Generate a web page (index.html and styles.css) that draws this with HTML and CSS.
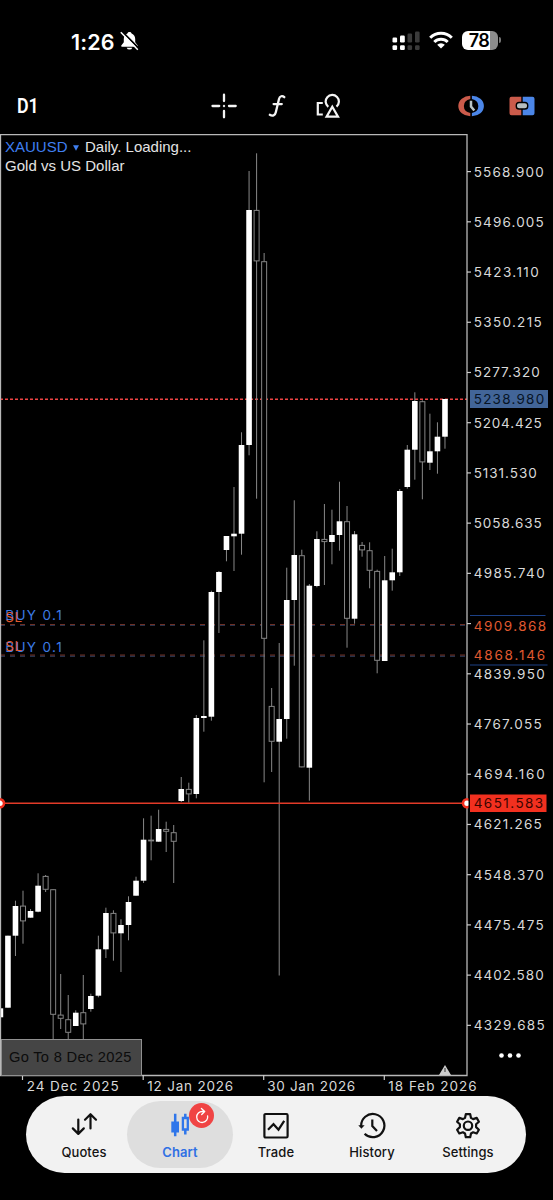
FILE: index.html
```
<!DOCTYPE html>
<html lang="en">
<head>
<meta charset="utf-8">
<title>XAUUSD Chart</title>
<link rel="stylesheet" href="styles.css">
</head>
<body>
<div class="phone">
  <header class="status">
    <div class="clock">
      <span>1:26</span>
      <svg width="19" height="20" viewBox="0 0 19 20"><path d="M9.500 1C8.200 1 7.600 1.700 7.400 2.500 4.900 3.400 3.800 5.500 3.800 8v3.200L1.300 14.500c-.4.700-.1 1.200.7 1.200h15c.8 0 1.100-.5.700-1.200L15.200 11.200V8c0-2.500-1.100-4.600-3.600-5.500C11.400 1.700 10.800 1 9.500 1zM6.700 16.700a2.900 2.500 0 0 0 5.600 0z" fill="#fff"/><path d="M2.200.6 19 17.600" stroke="#000" stroke-width="1.800"/><path d="M.8 1.300 17.800 18.800" stroke="#fff" stroke-width="1.500"/></svg>
    </div>
    <div class="indicators">
      <svg width="29" height="20" viewBox="0 0 29 20"><g fill="#fff"><rect x=".5" y="6.500" width="4.600" height="5" rx="1.200"/><rect x="8" y="4.500" width="4.800" height="7" rx="1.200"/><rect x=".5" y="14.300" width="4.600" height="4.700" rx="1.200"/><rect x="8" y="14.300" width="4.800" height="4.700" rx="1.200"/></g><g fill="#3b3b3b"><rect x="15.500" y="2.500" width="4.600" height="9" rx="1.200"/><rect x="23" y=".5" width="4.600" height="11" rx="1.200"/><rect x="15.500" y="14.300" width="4.600" height="4.700" rx="1.200"/><rect x="23" y="14.300" width="4.600" height="4.700" rx="1.200"/></g></svg>
      <svg class="wifi" width="24" height="18" viewBox="0 0 24 18"><g fill="none" stroke="#fff" stroke-width="3"><path d="M1.200 6.800a15.300 15.300 0 0 1 21.600 0"/><path d="M5.300 11a9.500 9.500 0 0 1 13.400 0"/></g><path d="M12 17.600 8.200 13.800a5.400 5.400 0 0 1 7.600 0z" fill="#fff"/></svg>
      <div class="battery"><span>78</span></div><i class="cap"></i>
    </div>
  </header>

  <nav class="toolbar">
    <div class="period">D1</div>
    <div class="tools">
      <svg width="26" height="26" viewBox="0 0 26 26"><g stroke="#f4f4f4" stroke-width="2.300" stroke-linecap="round"><path d="M13 1.700v6.300M13 18v6.300M1.500 13h6.700M18 13h6.700"/></g><circle cx="13" cy="13" r="1.200" fill="#ddd"/></svg>
      <svg width="18" height="24" viewBox="0 0 18 24"><path d="M16.300 3.200C14.400 1.400 11.700 1.900 11 4.900L7.800 18.200C7.100 21.600 4.500 22.500 1.800 20.800M5.600 10.100h8.200" fill="none" stroke="#f4f4f4" stroke-width="2.300" stroke-linecap="round"/></svg>
      <svg width="24" height="26" viewBox="0 0 24 26"><g fill="none" stroke="#f4f4f4" stroke-width="2.200"><path d="M6.800 10H1.800V21.500h5"/><path d="M12.300 13.800A6.600 6.600 0 1 1 20.500 13.600"/><path d="M16.300 13.800 22 23.700H10.600z"/></g></svg>
    </div>
    <div class="trade-tools">
      <svg width="26" height="22" viewBox="0 0 26 22"><path d="M12.300.8A12 10.200 0 0 0 12.300 21.200V18A8.400 7.200 0 0 1 12.300 4z" fill="#cb5b4b"/><path d="M13.900.8A12 10.200 0 0 1 13.900 21.200V18A8.400 7.200 0 0 0 13.900 4z" fill="#4b86e8"/><path d="M13 5.800v5.700l3.300 4" fill="none" stroke="#b9c4c5" stroke-width="2.500"/></svg>
      <svg width="26" height="20" viewBox="0 0 26 20"><path d="M2.500.8h9.800v18.400H2.500a2 2 0 0 1-2-2V2.800a2 2 0 0 1 2-2z" fill="#cb5b4b"/><path d="M13.700.8h9.800a2 2 0 0 1 2 2v14.400a2 2 0 0 1-2 2h-9.800z" fill="#4b86e8"/><rect x="7.300" y="6.500" width="11.400" height="6.500" rx="2.800" fill="#b6bec0" stroke="#000" stroke-width="1.400"/></svg>
    </div>
  </nav>

  <main class="chart">
    <svg id="plot" class="plot" width="553" height="966" viewBox="0 134 553 966">
      <g id="levels" class="levels">
        <path class="last" d="M0 399.200H467"/>
        <path class="sl" d="M0 624.500H467M0 655.100H467"/>
        <path class="order" d="M0 625.500H467M0 656.300H467"/>
      </g>
      <g id="candles"></g>
      <path class="alert" d="M0 803.300H467"/>
      <path class="frame" d="M0 134.500H467V1075.500H0M.5 134V1075"/>
      <g class="handles"><circle cx="0" cy="803.300" r="4"/><circle cx="467" cy="803.300" r="4"/></g>
      <path class="mask" d="M468.500 798h5v11h-5z"/>
      <path d="M439 1075 445 1065 451 1075z" fill="#ccc"/><path d="M445 1068v4" stroke="#333"/>
      <rect class="order-line" x="470" y="615" width="75.500" height="1"/><rect class="order-line" x="470" y="664.500" width="77.500" height="1"/>
      <rect x="470" y="390" width="78" height="18" fill="#426598"/>
      <rect x="470" y="794.500" width="76.500" height="17.500" fill="#f2301f"/>
      <g id="axis" class="axis"></g>
      <g class="axis">
        <text x="473.700" y="404.300" class="on-blue" textLength="70.500">5238.980</text>
        <text x="473.700" y="631" class="stop" textLength="72.500">4909.868</text>
        <text x="473.700" y="659.600" class="stop" textLength="71.500">4868.146</text>
        <text x="473.700" y="808.300" class="on-red" textLength="69.500">4651.583</text>
        <text x="5.200" y="652.300" class="buy" textLength="56.500">BUY 0.1</text>
        <text x="5.200" y="620.300" class="buy" textLength="56.500">BUY 0.1</text>
        <text x="5.200" y="651" class="stop" textLength="17">SL</text>
        <text x="5.200" y="621.500" class="stop" textLength="17">SL</text>
      </g>
      <g fill="#fff"><circle cx="501.500" cy="1055.500" r="2.300"/><circle cx="510" cy="1055.500" r="2.300"/><circle cx="518.500" cy="1055.500" r="2.300"/></g>
    </svg>
    <div class="legend">
      <div><b>XAUUSD</b> <svg width="6" height="6" viewBox="0 0 6 6"><path d="M0 .3h6L3 5.800z" fill="#3f7ff0"/></svg> <span>Daily. Loading...</span></div>
      <div class="name">Gold vs US Dollar</div>
    </div>
    <div class="goto">Go To 8 Dec 2025</div>
  </main>

  <nav class="tabs">
    <div class="tab"><svg width="28" height="28" viewBox="0 0 28 28"><path d="M8.300 7.500v13.700M2.800 16.400l5.500 5.500 5.500-5.500M20.500 16.500V3M15 7.700l5.500-5.500L26 7.700" fill="none" stroke="#111" stroke-width="2.200" stroke-linecap="round" stroke-linejoin="round"/></svg><span>Quotes</span></div>
    <div class="tab active"><svg width="28" height="28" viewBox="0 0 28 28"><g fill="none" stroke="#2f76ea" stroke-width="2.500"><path d="M9.200 1.800v22.500M19.300 1.800v4M19.300 17.500v5"/><path d="M16.900 6h4.900v11.500h-4.900z" stroke-width="2.300"/></g><path d="M5.300 9.500H13v11H5.300z" fill="#2f76ea"/></svg><span>Chart</span>
      <div class="badge"><svg width="16" height="18" viewBox="0 0 16 18"><path d="M13.600 8.900A5.500 5.500 0 1 1 8.500 4.500h1.700M7.400 1.500l3.300 3-3 3" fill="none" stroke="#fff" stroke-width="1.300" stroke-linecap="round" stroke-linejoin="round"/></svg></div></div>
    <div class="tab"><svg width="28" height="28" viewBox="0 0 28 28"><g fill="none" stroke="#111" stroke-width="2.200"><rect x="2.400" y="2" width="23.200" height="23.500" rx="1.200"/><path d="M6 17.700l5.500-5.500 5 5.500L22.200 8.800"/></g></svg><span>Trade</span></div>
    <div class="tab"><svg width="28" height="28" viewBox="0 0 28 28"><path d="M3.200 14.300A11.600 11.600 0 1 1 6.600 21.800M14.300 7.500v6.600l4.700 4.900" fill="none" stroke="#111" stroke-width="2.200"/><path d="M.3 13.200h6.300l-3.200 3.500z" fill="#111"/></svg><span>History</span></div>
    <div class="tab"><svg width="28" height="28" viewBox="0 0 28 28"><g fill="none" stroke="#111" stroke-width="2.200" stroke-linejoin="round"><path d="M11.800 2.200h4.400l.8 3.700 2.100 1.200 3.600-1.200 2.200 3.800-2.800 2.600v2.800l2.800 2.600-2.200 3.800-3.600-1.200-2.100 1.200-.8 3.700h-4.400l-.8-3.700-2.100-1.200-3.600 1.200L3.100 17.700l2.800-2.600v-2.800L3.100 9.700l2.200-3.800 3.600 1.200L11 5.900z"/><circle cx="14" cy="13.700" r="4.200"/></g></svg><span>Settings</span></div>
  </nav>
</div>
<script src="chart.js"></script>
</body>
</html>
```
FILE: styles.css
```
* { box-sizing: border-box; }
body { margin: 0; background: #000; color: #fff; font-family: Inter, "Liberation Sans", sans-serif; }
svg { display: block; flex: none; }
.phone { width: 553px; height: 1200px; display: flex; flex-direction: column; overflow: hidden; background: #000; }

.status { height: 76px; padding: 30px 52px 0 71px; display: flex; justify-content: space-between; align-items: flex-start; }
.clock { display: flex; gap: 5px; font-size: 21.500px; line-height: 24px; font-weight: 600; letter-spacing: .1px; }
.clock svg { margin-top: 1px; }
.indicators { display: flex; align-items: flex-start; padding-top: 1px; }
.wifi { margin: 0 9px 0 8px; }
.battery { width: 36px; height: 19px; padding-right: 2px; border-radius: 6px; background: linear-gradient(90deg, #fff 28px, #8b8b8b 28px); color: #000; font-size: 18px; font-weight: 600; line-height: 19px; text-align: center; letter-spacing: -.6px; }
.cap { width: 2px; height: 6px; margin: 6px 0 0 1px; border-radius: 0 2px 2px 0; background: #777; }

.toolbar { height: 58px; padding: 1px 18px 0 17px; display: grid; grid-template-columns: 194px 1fr auto; align-items: center; }
.period { font: 600 20.500px/24px "Roboto", sans-serif; transform: scaleX(.87); transform-origin: left; }
.tools { display: flex; align-items: center; gap: 30.500px; }
.trade-tools { display: flex; align-items: center; gap: 25px; }

.chart { position: relative; height: 962px; flex: none; }
.last { stroke: #ef4444; stroke-width: 1.600; stroke-dasharray: 3 2; }
.sl { stroke: #6e3025; stroke-width: 1.200; stroke-dasharray: 5 5; }
.order { stroke: #26314a; stroke-width: 1.200; stroke-dasharray: 5 5; }
.order-line { fill: #1d4186; }
.alert { stroke: #e23a28; stroke-width: 1.600; }
.frame { fill: none; stroke: #b8b8b8; stroke-width: 1.300; }
.handles { fill: #fff; stroke: #f2301f; stroke-width: 2.600; }
.mask { fill: #000; }
.wick { stroke: #888; stroke-width: 1; }
.up { fill: #fff; }
.down { fill: #000; stroke: #858585; stroke-width: 1; }
.axis { fill: #d9d9d9; font-size: 13.500px; }
.axis path { stroke: #ccc; stroke-width: 1.200; }
.axis .on-blue { fill: #071426; }
.axis .on-red { fill: #3a0500; }
.axis .stop { fill: #e05a30; }
.axis .buy { fill: #3d7be4; }

.legend { position: absolute; left: 5px; top: 4px; font: 15px/18.500px "Liberation Sans", sans-serif; color: #e4e4e4; }
.legend div { display: flex; align-items: center; white-space: nowrap; }
.legend b { font-weight: 400; color: #3f7ff0; width: 63px; }
.legend svg { margin: 2px 6px 0 5px; }
.legend .name { letter-spacing: .02px; }
.goto { position: absolute; left: 1px; top: 905px; width: 141px; height: 37px; padding-left: 7px; border: 1.500px solid #909090; background: #454545; color: #0c0c0c; font: 14.700px/35px "Liberation Sans", sans-serif; letter-spacing: .28px; white-space: nowrap; }

.tabs { width: 500px; height: 77px; flex: none; margin: 0 0 27px 26px; padding: 5px 0 5px 10px; border-radius: 39px; background: #f2f2f2; display: grid; grid-template-columns: repeat(5, 96px); color: #141414; }
.tab { position: relative; display: flex; flex-direction: column; align-items: center; padding-top: 11px; margin: 0 -5px; border-radius: 34px; font-size: 13px; font-weight: 500; line-height: 18px; letter-spacing: .1px; }
.tab span { margin-top: 3px; }
.active { background: #dedede; color: #2f70e4; }
.active span { font-weight: 600; }
.badge { position: absolute; left: 62px; top: 2px; width: 25px; height: 25px; border-radius: 50%; background: #f04444; display: flex; align-items: center; justify-content: center; }
```
FILE: chart.js
```
// Each candle: [high, top of body, bottom of body, low, rising]
const candles = [
[1008.3,1008.3,1017.3,1017.3,1],[935.7,935.7,1007.7,1007.7,1],[900.7,906,935.7,956,1],[890.7,905.7,921.3,943.7,0],[909,911,917.7,917.7,1],
[873.3,885.7,911.7,912.3,1],[875,876,889.7,892,0],[889.3,889.3,1014.7,1040,0],[974,1014.7,1018.7,1029,0],[995,1019.3,1032.7,1040,0],
[1010.3,1012.7,1026,1026,1],[975,1012.3,1024.3,1040,0],[993.7,996,1009,1011.7,1],[935.7,949.3,995.7,997.3,1],[907.7,913,949.3,958,1],
[910.3,913,933.3,960.7,0],[919.3,925,933.3,972,1],[896.3,902,925,940.3,1],[876.7,880.7,895.7,895.7,1],[818.3,839.7,880.7,883,1],
[815.7,839.7,841.3,860.3,0],[809.7,829,841.7,841.7,1],[821.7,829,831.7,852,0],[825,832.3,841.7,883,0],[777,789,801,802,1],
[782.7,789,794.3,802.7,0],[715,718,794,798.3,1],[640.3,716,718,731.7,1],[590.7,592,716.7,720.7,1],[571,572,592,633,1],
[536,536,550,561.3,1],[487,533.7,536.3,571,1],[432.3,445,533.7,554.7,1],[171,210,445,455.3,1],[153.3,210,261.3,498.7,0],
[253,261.3,638.7,782.3,0],[688,706,741.7,772,0],[643,719,741.7,975.5,1],[567.7,600,719,738.7,1],[500.3,555,600,665.7,1],
[549.7,555.3,767.3,767.3,0],[584,585.7,767.7,800.7,1],[531.3,539,586,587.3,1],[504,539,542,585,0],[509.7,535,542,564.3,1],
[481.7,521.3,535,550.7,1],[506,521.3,618.7,647.7,0],[531,534.3,618.7,623.7,1],[542,545,550.3,556.7,0],[542.3,550.3,570.7,588.3,0],
[569.7,571,660.7,673.3,0],[556,580.3,661,661,1],[548.7,572.3,580.3,590.7,1],[489,491,572.3,576,1],[445,449.7,487,488.7,1],
[392.3,401,449.7,479.7,1],[400.3,401.3,462.3,499.3,0],[413.7,451.3,462.7,470,1],[422.3,436.7,451.3,473.7,1],[399,399,436.7,448.7,1]
];
const NS = 'http://www.w3.org/2000/svg';
function add(parent, name, attrs, text) {
  const el = document.createElementNS(NS, name);
  for (const key in attrs) el.setAttribute(key, attrs[key]);
  if (text) el.textContent = text;
  parent.appendChild(el);
}
const layer = document.getElementById('candles');
candles.forEach(([high, top, bottom, low, rising], i) => {
  const x = 0.41 + 7.535 * i;
  if (low > high) add(layer, 'path', { class: 'wick', d: `M${x} ${high}V${low}` });
  if (rising) add(layer, 'rect', { class: 'up', x: x - 2.8, y: top, width: 5.6, height: bottom - top });
  else add(layer, 'rect', { class: 'down', x: x - 2.5, y: top + .4, width: 5, height: Math.max(.8, bottom - top - .8) });
});
const axis = document.getElementById('axis');
const prices = ['5568.900','5496.005','5423.110','5350.215','5277.320','5204.425','5131.530','5058.635','4985.740','','4839.950','4767.055','4694.160','4621.265','4548.370','4475.475','4402.580','4329.685'];
const widths = [70,70,65,68,66,68,63,68,71,0,71,68,71,68,70,70,70,71];
prices.forEach((price, i) => {
  const y = 171.6 + 50.22 * i;
  add(axis, 'path', { d: `M467 ${y}h4` });
  if (price) add(axis, 'text', { x: 473.7, y: y + 5, textLength: widths[i] }, price);
});
[[22.5,'24 Dec 2025',92,26.7],[143.2,'12 Jan 2026',86,147.2],[263.7,'30 Jan 2026',88,267.2],[384.3,'18 Feb 2026',88.5,388.2]].forEach(([tick, label, width, x]) => {
  add(axis, 'path', { d: `M${tick} 1075v5` });
  add(axis, 'text', { x, y: 1091.2, textLength: width }, label);
});
```
